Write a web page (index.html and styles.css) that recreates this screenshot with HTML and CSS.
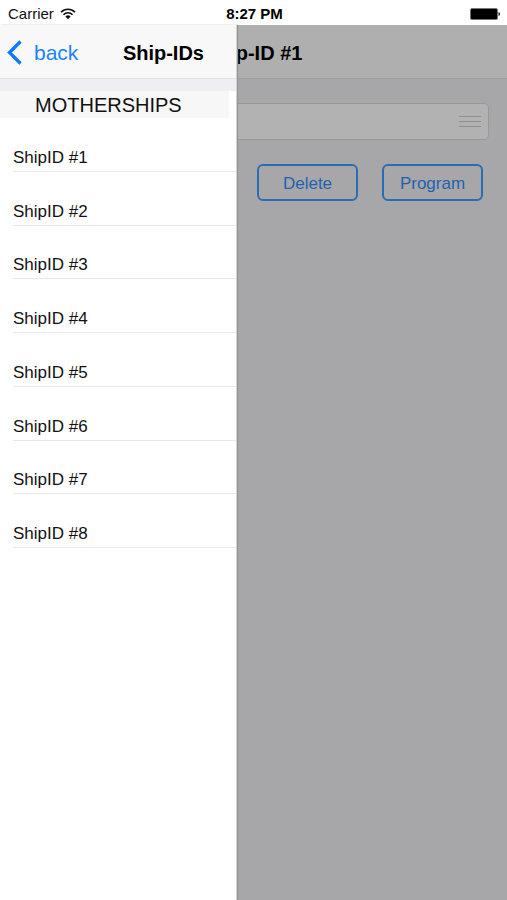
FILE: index.html
```html
<!DOCTYPE html>
<html lang="en">
<head>
<meta charset="utf-8">
<meta name="viewport" content="width=device-width, initial-scale=1">
<title>Ship-IDs</title>
<link rel="stylesheet" href="styles.css">
</head>
<body>
<header class="status">
  <div class="status-left">
    <span>Carrier</span>
    <svg class="wifi" width="16" height="12" viewBox="0 0 16 12" aria-hidden="true">
      <path d="M1 4.200a9.800 9.800 0 0 1 14 0M3.500 6.700a6.300 6.300 0 0 1 9 0" fill="none" stroke="#111" stroke-width="1.600"/>
      <path d="M8 11.200 5.400 8.600a3.700 3.700 0 0 1 5.200 0z" fill="#111"/>
    </svg>
  </div>
  <time class="clock">8:27 PM</time>
  <svg class="battery" width="31" height="13" viewBox="0 0 31 13" aria-hidden="true">
    <rect x="0.5" y="0.5" width="27" height="11" rx="1.5" fill="#000" stroke="#777"/>
    <path d="M28.500 4c2 .6 2 3.400 0 4z" fill="#222"/>
  </svg>
</header>
<div class="stage">
  <main class="page">
    <div class="bar page-bar"><h1 class="title">Ship-ID #1</h1></div>
    <div class="page-body">
      <div class="field">
        <svg width="22" height="13" viewBox="0 0 22 13" aria-hidden="true">
          <path d="M0 1.500h22M0 6.500h22M0 11.500h22" stroke="#8e8e90" stroke-width="1"/>
        </svg>
      </div>
      <div class="actions">
        <button class="action" type="button">Delete</button>
        <button class="action" type="button">Program</button>
      </div>
    </div>
  </main>
  <aside class="drawer">
    <div class="bar drawer-bar">
      <a class="back" href="#">
        <svg width="16" height="26" viewBox="0 0 16 26" aria-hidden="true">
          <path d="M13.500 1.500 2.500 12.500l11 11" fill="none" stroke="#0a7aff" stroke-width="3.300"/>
        </svg>
        <span>back</span>
      </a>
      <h2 class="title drawer-title">Ship-IDs</h2>
    </div>
    <div class="section"><h3 class="section-title">MOTHERSHIPS</h3></div>
    <ul class="ships">
      <li class="ship">ShipID #1</li>
      <li class="ship">ShipID #2</li>
      <li class="ship">ShipID #3</li>
      <li class="ship">ShipID #4</li>
      <li class="ship">ShipID #5</li>
      <li class="ship">ShipID #6</li>
      <li class="ship">ShipID #7</li>
      <li class="ship">ShipID #8</li>
    </ul>
  </aside>
</div>
</body>
</html>
```
FILE: styles.css
```css
* {
  box-sizing: border-box;
}

body {
  margin: 0;
  min-height: 100vh;
  display: flex;
  flex-direction: column;
  background: #fff;
  color: #111;
  font-family: "Liberation Sans", Arial, sans-serif;
  font-size: 17px;
  line-height: 20px;
}

h1, h2, h3, ul {
  margin: 0;
  padding: 0;
}

.status {
  display: grid;
  grid-template-columns: 1fr auto 1fr;
  align-items: center;
  height: 25px;
  padding: 3px 6px 0 8px;
  font-size: 15px;
}

.status-left {
  display: flex;
  align-items: center;
  gap: 6px;
}

.clock {
  color: #000;
  font-weight: bold;
}

.battery {
  justify-self: end;
}

/* The drawer and the dimmed page share one grid cell. */
.stage {
  flex: 1;
  display: grid;
}

.page,
.drawer {
  grid-area: 1 / 1;
}

.page {
  background: #a7a7a9;
}

.bar {
  height: 54px;
  display: flex;
  align-items: center;
  padding-top: 2px;
  border-bottom: 1px solid;
}

.page-bar {
  justify-content: center;
  background: #afafaf;
  border-color: #9e9ea0;
}

.title {
  color: #000;
  font-size: 20px;
  line-height: 24px;
}

.page-body {
  padding: 24px 18px 0;
}

.field {
  height: 37px;
  display: flex;
  align-items: center;
  justify-content: flex-end;
  padding-right: 7px;
  background: #b2b2b2;
  border: 1px solid #99999b;
  border-radius: 5px;
}

.actions {
  display: flex;
  justify-content: flex-end;
  gap: 24px;
  padding: 24px 6px 0 0;
}

.action {
  width: 101px;
  height: 37px;
  padding: 2px 0 0;
  background: transparent;
  border: 2px solid #2a6cb8;
  border-radius: 6px;
  color: #1f62b0;
  font: inherit;
}

.drawer {
  width: 237px;
  background: #fff;
  border-right: 1px solid #d0d0d0;
  box-shadow: 1px 0 1px #989898;
}

.drawer-bar {
  padding-left: 7px;
  padding-right: 32px;
  justify-content: space-between;
  background: #f8f8f9;
  border-color: #e2e2e5;
}

.back {
  display: flex;
  align-items: center;
  gap: 11px;
  color: #1a84ff;
  font-size: 21px;
  line-height: 24px;
  text-decoration: none;
}

.section {
  padding: 12px 7px 0 0;
  background: linear-gradient(#efeff3 12px, #fff 12px);
}

.section-title {
  padding: 2px 0 1px 35px;
  background: #f7f7f7;
  font-size: 20px;
  font-weight: normal;
  line-height: 24px;
}

.ships {
  height: 430px;
  display: grid;
  grid-auto-rows: 1fr;
  padding-left: 13px;
  list-style: none;
}

.ship {
  display: flex;
  align-items: flex-end;
  padding-bottom: 3px;
  border-bottom: 1px solid #e8e8ea;
}
```
